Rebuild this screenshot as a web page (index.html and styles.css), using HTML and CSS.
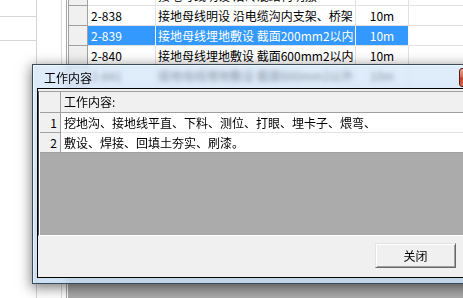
FILE: index.html
```html
<!DOCTYPE html>
<html lang="zh-CN">
<head>
<meta charset="utf-8">
<title>工作内容</title>
<link rel="stylesheet" href="styles.css">
</head>
<body>
<div class="app">
  <div class="side">
    <div class="side-row r1"></div>
    <div class="side-row r2"></div>
  </div>
  <div class="strip"></div>
  <div class="gap"></div>
  <div class="table">
    <div class="row"><div class="rh"></div><div class="c code"></div><div class="c name">接地母线明设 沿砖混结构明敷</div><div class="c unit"></div><div class="c rest"></div></div>
    <div class="row"><div class="rh"></div><div class="c code">2-838</div><div class="c name">接地母线明设 沿电缆沟内支架、桥架</div><div class="c unit">10m</div><div class="c rest"></div></div>
    <div class="row sel"><div class="rh"></div><div class="c code">2-839</div><div class="c name">接地母线埋地敷设 截面200mm2以内</div><div class="c unit">10m</div><div class="c rest"></div></div>
    <div class="row"><div class="rh"></div><div class="c code">2-840</div><div class="c name">接地母线埋地敷设 截面600mm2以内</div><div class="c unit">10m</div><div class="c rest"></div></div>
    <div class="row"><div class="rh"></div><div class="c code">2-841</div><div class="c name">接地母线埋地敷设 截面600mm2以外</div><div class="c unit">10m</div><div class="c rest"></div></div>
    <div class="row"><div class="rh"></div><div class="c code"></div><div class="c name"></div><div class="c unit"></div><div class="c rest"></div></div>
    <div class="row"><div class="rh"></div><div class="c code"></div><div class="c name"></div><div class="c unit"></div><div class="c rest"></div></div>
    <div class="table-empty"></div>
  </div>
</div>

<div class="dialog">
  <div class="titlebar">
    <span class="title">工作内容</span>
    <span class="closebtn"></span>
  </div>
  <div class="client">
    <div class="grid">
      <div class="g-row g-head"><div class="g-rh"></div><div class="g-c">工作内容:</div></div>
      <div class="g-row"><div class="g-rh">1</div><div class="g-c">挖地沟、接地线平直、下料、测位、打眼、埋卡子、煨弯、</div></div>
      <div class="g-row"><div class="g-rh">2</div><div class="g-c">敷设、焊接、回填土夯实、刷漆。</div></div>
      <div class="g-empty"></div>
    </div>
    <div class="footer">
      <button class="btn" type="button">关闭</button>
    </div>
  </div>
</div>
</body>
</html>
```

FILE: styles.css
```css
* { box-sizing: border-box; }
html, body { margin: 0; padding: 0; }
body {
  width: 463px;
  height: 298px;
  overflow: hidden;
  position: relative;
  background: #fff;
  font-family: "Noto Sans CJK SC", "Noto Sans", sans-serif;
  font-size: 12px;
  color: #000;
}

/* ---------- background application ---------- */
.app { display: flex; height: 298px; }
.side {
  width: 37px;
  border-right: 1px solid #d6d6d6;
  display: flex;
  flex-direction: column;
}
.side-row { border-bottom: 1px solid #d6d6d6; }
.side-row.r1 { height: 17px; }
.side-row.r2 { height: 24px; }
.strip { width: 25px; border-right: 1px solid #dcdcdc; }
.gap { width: 5px; border-right: 1px solid #a8a8a8; }
.table {
  flex: 1;
  padding-left: 1px;
  margin-top: -14px;
  display: flex;
  flex-direction: column;
  overflow: hidden;
}
.row { display: flex; height: 20px; flex: none; }
.rh {
  width: 20px;
  background: #f0f0f0;
  border-left: 1px solid #a0a0a0;
  border-right: 1px solid #a0a0a0;
  border-bottom: 1px solid #a0a0a0;
}
.c {
  border-right: 1px solid #e2e2e2;
  border-bottom: 1px solid #e2e2e2;
  line-height: 19px;
  white-space: nowrap;
  overflow: hidden;
}
.code { width: 68px; padding-left: 3px; }
.name { width: 200px; padding-left: 2px; }
.unit { width: 53px; text-align: center; }
.rest { flex: 1; border-right: none; }
.row.sel .code,
.row.sel .name,
.row.sel .unit {
  background: #3399ff;
  color: #fff;
  border-right-color: #f4f8ff;
}
.table-empty { flex: 1; background: #ababab; }

/* ---------- dialog ---------- */
.dialog {
  position: absolute;
  left: 32px;
  top: 64px;
  width: 477px;
  height: 220px;
  border: 1px solid #3b4a5b;
  padding: 0 4px 5px 4px;
  display: flex;
  flex-direction: column;
  background: linear-gradient(rgba(206, 226, 248, 0.64), rgba(196, 218, 242, 0.84));
  -webkit-backdrop-filter: blur(2.5px);
  backdrop-filter: blur(2.5px);
  box-shadow: 0 3px 12px 1px rgba(0, 0, 0, 0.5), inset 1px 1px 0 rgba(255, 255, 255, 0.55);
}
.titlebar {
  height: 23px;
  flex: none;
  display: flex;
  align-items: center;
  padding: 3px 0 0 7px;
}
.title { line-height: 16px; color: #000; }
.closebtn {
  margin-left: auto;
  margin-right: 2px;
  align-self: flex-start;
  width: 43px;
  height: 19px;
  border: 1px solid #4e2018;
  border-radius: 3px;
  background: linear-gradient(#e8a493, #d46a52 45%, #c2412a 55%, #d66c50);
}
.client {
  flex: 1;
  border: 1px solid #000;
  background: #f0f0f0;
  display: flex;
  flex-direction: column;
}
.grid {
  margin-top: 2px;
  height: 145px;
  flex: none;
  display: flex;
  flex-direction: column;
  background: #fff;
  border-left: 1px solid #4a4a4a;
  border-top: 1px solid #a0a0a0;
  border-bottom: 1px solid #fff;
  padding-left: 1px;
}
.g-row { display: flex; height: 20px; flex: none; }
.g-head { height: 21px; }
.g-rh {
  width: 21px;
  background: #f0f0f0;
  border-right: 1px solid #a0a0a0;
  border-bottom: 1px solid #a0a0a0;
  text-align: right;
  padding-right: 3px;
  line-height: 19px;
}
.g-c {
  flex: 1;
  padding-left: 3px;
  line-height: 19px;
  white-space: nowrap;
  overflow: hidden;
  border-bottom: 1px solid #e3e3e3;
}
.g-head .g-c { background: #f0f0f0; border-bottom-color: #a0a0a0; line-height: 20px; }
.g-row:nth-child(3) .g-c { border-bottom-color: #a0a0a0; }
.g-empty { flex: 1; background: #ababab; }

.footer {
  flex: 1;
  display: flex;
  justify-content: flex-end;
  align-items: flex-start;
  padding: 7px 47px 0 0;
}
.btn {
  width: 81px;
  height: 25px;
  padding: 0;
  margin: 0;
  background: #f0f0f0;
  border: 1px solid;
  border-color: #e3e3e3 #696969 #696969 #e3e3e3;
  box-shadow: inset 1px 1px 0 #fff, inset -1px -1px 0 #a0a0a0;
  border-radius: 0;
  font-family: "Noto Sans CJK SC", "Noto Sans", sans-serif;
  font-size: 12px;
  color: #000;
  line-height: 21px;
}
```
